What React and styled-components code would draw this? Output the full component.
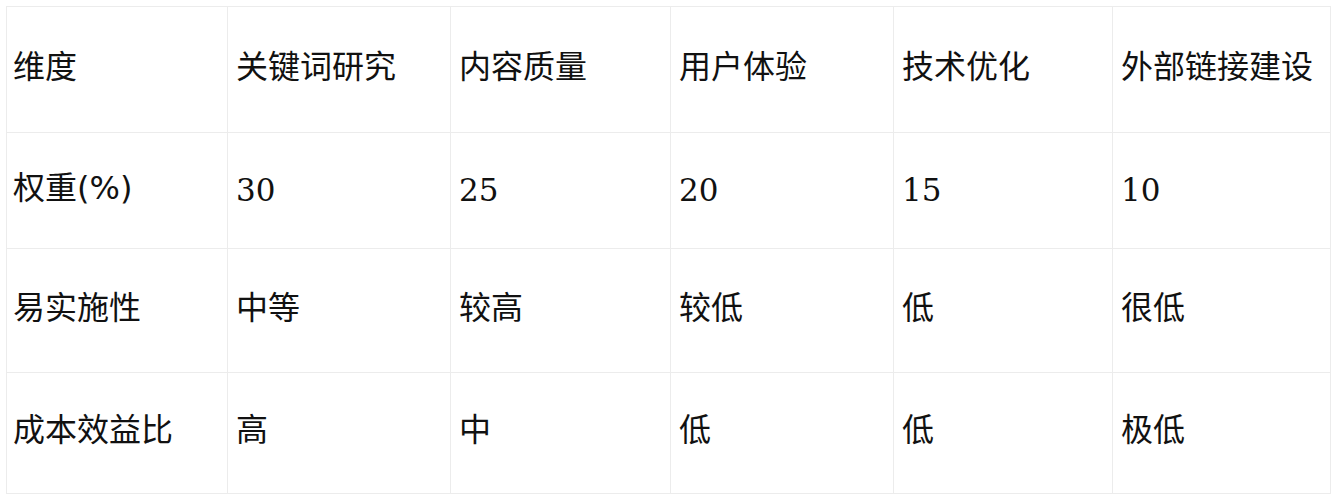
import React from "react";
import styled, { createGlobalStyle } from "styled-components";

const GlobalStyle = createGlobalStyle`
  body {
    margin: 0;
    background: #fff;
  }
`;

const Page = styled.div`
  padding: 6px 10px 0 6px;
`;

const Table = styled.table`
  width: 1324px;
  border-collapse: collapse;
  table-layout: fixed;
  color: #111;
`;

const Col = styled.col`
  width: ${(p) => p.$w}px;
`;

const Row = styled.tr`
  height: ${(p) => p.$h}px;
`;

const Cell = styled.td`
  border: 1px solid #ececec;
  padding: 0 8px ${(p) => (p.$num ? "0" : "6px")};
  vertical-align: middle;
  text-align: left;
  white-space: nowrap;
  font-family: ${(p) =>
    p.$num
      ? '"DejaVu Serif", serif'
      : '"DejaVu Sans", "Noto Sans CJK SC", sans-serif'};
  font-size: ${(p) => (p.$num ? "31px" : "32px")};
  line-height: 1;

  &:first-child {
    padding-left: 6px;
  }
`;

const widths = [221, 223, 220, 223, 219, 218];

const rows = [
  { h: 126, cells: ["维度", "关键词研究", "内容质量", "用户体验", "技术优化", "外部链接建设"] },
  { h: 116, cells: ["权重(%)", "30", "25", "20", "15", "10"], num: true },
  { h: 124, cells: ["易实施性", "中等", "较高", "较低", "低", "很低"] },
  { h: 121, cells: ["成本效益比", "高", "中", "低", "低", "极低"] },
];

const App = () => {
  return (
    <>
      <GlobalStyle />
      <Page>
        <Table>
          <colgroup>
            {widths.map((w, i) => (
              <Col key={i} $w={w} />
            ))}
          </colgroup>
          <tbody>
            {rows.map((row, i) => (
              <Row key={i} $h={row.h}>
                {row.cells.map((text, j) => (
                  <Cell key={j} $num={row.num && j > 0}>
                    {text}
                  </Cell>
                ))}
              </Row>
            ))}
          </tbody>
        </Table>
      </Page>
    </>
  );
};

export default App;
